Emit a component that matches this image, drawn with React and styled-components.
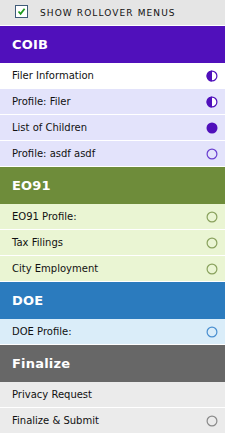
import React from 'react';
import styled, { createGlobalStyle } from 'styled-components';

// =======================
//   Global Styles
// =======================

const GlobalStyle = createGlobalStyle`
  html, body {
    margin: 0;
    padding: 0;
    background: #ffffff;
  }
  body {
    font-family: "DejaVu Sans", Verdana, sans-serif;
  }
`;

// =======================
//   Data
// =======================

const sections = [
  {
    title: 'COIB',
    header: '#5010bb',
    row: '#e3e3fb',
    ring: '#6a3fd0',
    items: [
      { label: 'Filer Information', state: 'half', bg: '#ffffff' },
      { label: 'Profile: Filer', state: 'half' },
      { label: 'List of Children', state: 'full' },
      { label: 'Profile: asdf asdf', state: 'empty' },
    ],
  },
  {
    title: 'EO91',
    header: '#6e8c3a',
    row: '#eaf5d3',
    ring: '#8aa25e',
    items: [
      { label: 'EO91 Profile:', state: 'empty' },
      { label: 'Tax Filings', state: 'empty' },
      { label: 'City Employment', state: 'empty' },
    ],
  },
  {
    title: 'DOE',
    header: '#2b7bbe',
    row: '#daedf9',
    ring: '#4a8fd0',
    items: [{ label: 'DOE Profile:', state: 'empty' }],
  },
  {
    title: 'Finalize',
    header: '#676767',
    row: '#ebebeb',
    ring: '#8a8a8a',
    items: [
      { label: 'Privacy Request', state: 'none' },
      { label: 'Finalize & Submit', state: 'empty' },
    ],
  },
];

// =======================
//   Component Styles
// =======================

const Panel = styled.div`
  width: 225px;
  height: 435px;
  overflow: hidden;
  display: flex;
  flex-direction: column;
`;

const TopBar = styled.label`
  display: flex;
  align-items: center;
  gap: 12px;
  height: 25px;
  padding-left: 15px;
  background: #e5e5e5;
  border-bottom: 1px solid #ffffff;
  flex-shrink: 0;
`;

const CheckBox = styled.span`
  width: 11px;
  height: 11px;
  border: 1px solid #3f5b78;
  background: #ffffff;
  display: flex;
  align-items: center;
  justify-content: center;
  margin-top: -2px;
`;

const TopLabel = styled.span`
  font-size: 9px;
  letter-spacing: 1.1px;
  color: #111111;
  text-transform: uppercase;
`;

const Header = styled.div`
  height: 37px;
  display: flex;
  align-items: center;
  padding-left: 12px;
  background: ${p => p.$color};
  color: #ffffff;
  font-weight: bold;
  font-size: 13px;
  letter-spacing: 0.2px;
  flex-shrink: 0;
`;

const Row = styled.div`
  height: 25px;
  display: flex;
  align-items: center;
  justify-content: space-between;
  padding: 0 7px 0 12px;
  background: ${p => p.$bg};
  border-bottom: 1px solid #ffffff;
  font-size: 10px;
  color: #111111;
  flex-shrink: 0;
`;

// =======================
//     Components
// =======================

const Status = ({ state, color, ring }) => {
  if (state === 'none') return null;
  const c = state === 'empty' ? ring : color;
  return (
    <svg width="12" height="12" viewBox="0 0 12 12">
      {state === 'full' && <circle cx="6" cy="6" r="5.5" fill={c} />}
      {state === 'half' && (
        <>
          <circle cx="6" cy="6" r="4.9" fill="#ffffff" stroke={c} strokeWidth="1.2" />
          <path d="M6 0.5 A5.5 5.5 0 0 0 6 11.5 Z" fill={c} />
        </>
      )}
      {state === 'empty' && (
        <circle cx="6" cy="6" r="4.9" fill="none" stroke={c} strokeWidth="1.2" />
      )}
    </svg>
  );
};

const App = () => {
  return (
    <Panel>
      <GlobalStyle />
      <TopBar>
        <CheckBox>
          <svg width="9" height="9" viewBox="0 0 9 9">
            <path d="M1.5 4.5 L3.6 6.8 L7.6 1.8" fill="none" stroke="#1f9a1f" strokeWidth="1.8" />
          </svg>
        </CheckBox>
        <TopLabel>Show Rollover Menus</TopLabel>
      </TopBar>

      {sections.map(section => (
        <React.Fragment key={section.title}>
          <Header $color={section.header}>{section.title}</Header>
          {section.items.map(item => (
            <Row key={item.label} $bg={item.bg || section.row}>
              <span>{item.label}</span>
              <Status state={item.state} color={section.header} ring={section.ring} />
            </Row>
          ))}
        </React.Fragment>
      ))}
    </Panel>
  );
};

export default App;
